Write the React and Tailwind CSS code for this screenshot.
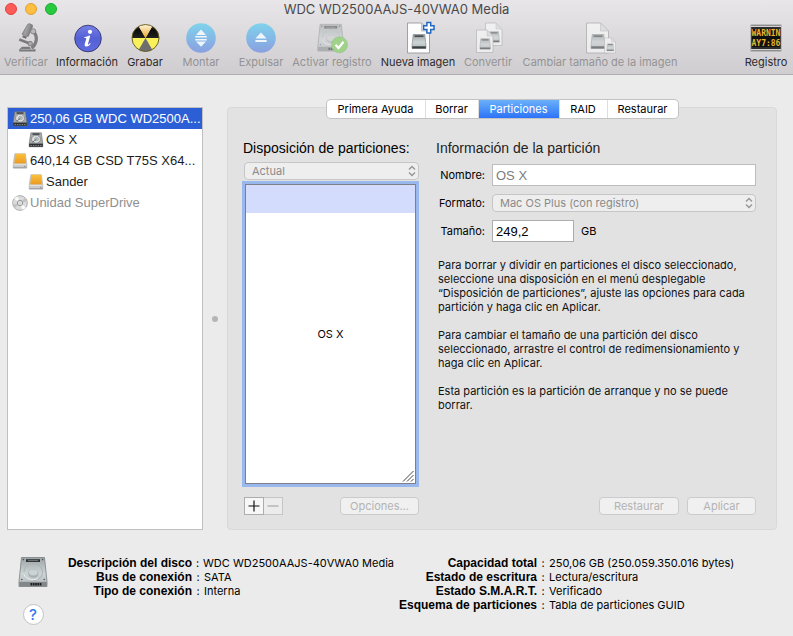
import React, { useState } from 'react';
import clsx from 'clsx';

const Microscope = () => (
  <svg viewBox="0 0 32 32" className="size-8">
    <defs>
      <linearGradient id="tube" x1="0" y1="0" x2="1" y2="0.4">
        <stop offset="0" stopColor="#6c6b6d" />
        <stop offset="0.5" stopColor="#a3a2a4" />
        <stop offset="1" stopColor="#737274" />
      </linearGradient>
    </defs>
    <path
      d="M23.500 9.500c4.200 4.800 4 11.500-1.800 17"
      fill="none"
      stroke="#7f7e80"
      strokeWidth="3.200"
    />
    <path d="M17.500 2.600l1.600-1 3.200 1.300.3 1.700-4.400 10-6.200-2.300z" fill="url(#tube)" stroke="#6f6e70" strokeWidth="0.600" />
    <path d="M13 13.300l4 1.500-1 1.900-3.800-1.400z" fill="#6f6e70" />
    <circle cx="23.200" cy="9.300" r="2.600" fill="#bab9bb" stroke="#767577" strokeWidth="0.800" />
    <path d="M9.600 16.200l11.300 4.300-1 2.600-11-4.300z" fill="#7a797b" />
    <circle cx="20.200" cy="21.600" r="2.300" fill="#a9a8aa" stroke="#737274" strokeWidth="0.800" />
    <path d="M12 24.800h7.500l1.500 2.200h4.500v2.600H9.200v-2z" fill="#79787a" />
    <path d="M10.500 27.400h14" stroke="#b5b4b6" strokeWidth="0.800" />
  </svg>
);

const Info = () => (
  <svg viewBox="0 0 32 32" className="size-8">
    <defs>
      <linearGradient id="info" x1="0" y1="0" x2="0" y2="1">
        <stop offset="0" stopColor="#7580e6" />
        <stop offset="0.5" stopColor="#5560d4" />
        <stop offset="1" stopColor="#5f6ce0" />
      </linearGradient>
    </defs>
    <circle cx="17" cy="16.500" r="13.300" fill="url(#info)" stroke="#34376e" strokeWidth="0.900" />
    <circle cx="19" cy="9.800" r="2.100" fill="#fff" />
    <path
      d="M13.300 15.200c1.800-.3 3.600-.9 5-1.600l.9.300-2.200 7.900c-.2.700.2.900.7.600.5-.3.900-.8 1.300-1.400l.7.500c-1 1.800-2.500 3.100-4.100 3.100-1.700 0-2.300-1.100-1.900-2.600l1.500-5.100c.1-.6-.1-.8-.7-.8h-1.300z"
      fill="#fff"
    />
  </svg>
);

const Burn = () => (
  <svg viewBox="0 0 32 32" className="size-8">
    <defs>
      <clipPath id="burnClip">
        <circle cx="16.500" cy="16" r="13.500" />
      </clipPath>
      <linearGradient id="burnDark" x1="0" y1="0" x2="0" y2="1">
        <stop offset="0" stopColor="#666" />
        <stop offset="0.500" stopColor="#0d0d0d" />
        <stop offset="1" stopColor="#222" />
      </linearGradient>
      <linearGradient id="burnTop" x1="0" y1="0" x2="0" y2="1">
        <stop offset="0.100" stopColor="#fffbe8" />
        <stop offset="1" stopColor="#eda42e" />
      </linearGradient>
    </defs>
    <g clipPath="url(#burnClip)">
      <rect width="32" height="32" fill="#f9f05a" />
      <path d="M16.500 16H0V0h7.300z" fill="url(#burnDark)" />
      <path d="M16.500 16H32V0h-6.300z" fill="url(#burnDark)" />
      <path d="M16.500 16L7.300 0h18.400z" fill="url(#burnTop)" />
      <path d="M16.500 16L7.300 32h18.400z" fill="#6e6e6e" />
    </g>
    <circle cx="16.500" cy="16" r="13.500" fill="none" stroke="#5c5320" strokeWidth="0.900" />
  </svg>
);

const Round = ({ children }) => (
  <svg viewBox="0 0 32 32" className="size-8">
    <defs>
      <linearGradient id="round" x1="0" y1="0" x2="0" y2="1">
        <stop offset="0" stopColor="#7fd3ec" />
        <stop offset="1" stopColor="#8a9fe0" />
      </linearGradient>
    </defs>
    <circle cx="16" cy="16" r="14.800" fill="url(#round)" />
    <g fill="#eef6fc">{children}</g>
  </svg>
);

const Mount = () => (
  <Round>
    <path d="M16 7.600l5 5.400H11zM16 24.800l5-5.400H11zM10.200 14h11.600v1.500H10.200zM10.200 17h11.600v1.500H10.200z" />
  </Round>
);

const Eject = () => (
  <Round>
    <path d="M16 10.400l5.600 6H10.400zM10.400 18h11.200v2H10.400z" />
  </Round>
);

const DriveShape = () => (
  <g>
    <path d="M4.500 1.500h23l2.500 24v5H2v-5z" fill="url(#drive)" stroke="#7c8183" strokeWidth="0.800" />
    <path d="M2.200 25.800h27.600v4.600H2.200z" fill="#82888a" />
    <path d="M13.500 28.200h11" stroke="#1d1d1d" strokeWidth="2.400" strokeDasharray="1.700 0.600" />
    <path d="M9 3.200h14v2.800H9z" fill="#2f3234" />
    <path d="M11 4.600h10" stroke="#888" strokeWidth="0.800" />
    <path d="M7 16c0-5 4-8.500 9-8.500s9.500 3.500 9.500 8.500-4 8.500-9.500 8.500" fill="none" stroke="#a9b1b3" strokeWidth="0.900" />
    <ellipse cx="16.300" cy="17.500" rx="5.200" ry="4.200" fill="#a7afb1" />
    <ellipse cx="16.300" cy="16.600" rx="4.400" ry="3" fill="#ccd3d4" />
    <path d="M7 18.500c1.500 4.500 9 6.500 14 4" fill="none" stroke="#f0f3f3" strokeWidth="0.900" />
    <g fill="#4f5355">
      <circle cx="6.400" cy="3.600" r="0.800" />
      <circle cx="25.600" cy="3.600" r="0.800" />
      <circle cx="4.800" cy="23.500" r="0.800" />
      <circle cx="27.200" cy="23.500" r="0.800" />
    </g>
  </g>
);

const Drive = ({ className }) => (
  <svg viewBox="0 0 32 32" className={className}>
    <defs>
      <linearGradient id="drive" x1="0" y1="0" x2="0" y2="1">
        <stop offset="0" stopColor="#9ba4a6" />
        <stop offset="0.550" stopColor="#cdd4d5" />
        <stop offset="1" stopColor="#b2babc" />
      </linearGradient>
    </defs>
    <DriveShape />
  </svg>
);

const SmallDrive = () => (
  <svg viewBox="0 0 16 16" className="size-4 shrink-0">
    <path d="M2.800.8h10.600l1.400 10.400v3.600H1.200v-3.600z" fill="#a4a8aa" stroke="#66696b" strokeWidth="0.500" />
    <path d="M1.200 11.600h13.600v3.200H1.200z" fill="#2d3032" />
    <path d="M2.500 13.600h11" stroke="#8d9091" strokeWidth="1" strokeDasharray="1.400 1" />
    <path d="M4.500 1.300h7v1.500h-7z" fill="#3d4042" />
    <ellipse cx="8" cy="7.200" rx="4.400" ry="3.900" fill="#dfe2e3" stroke="#6d7173" strokeWidth="0.600" />
    <ellipse cx="8.500" cy="7" rx="2" ry="1.600" fill="#c2c6c7" stroke="#7b7f81" strokeWidth="0.500" />
    <path d="M8.500 7.200l-4 3" stroke="#56595b" strokeWidth="0.800" />
  </svg>
);

const ExternalDrive = () => (
  <svg viewBox="0 0 16 16" className="size-4 shrink-0">
    <defs>
      <linearGradient id="external" x1="0" y1="0" x2="0" y2="1">
        <stop offset="0" stopColor="#fbc23c" />
        <stop offset="1" stopColor="#eb9a22" />
      </linearGradient>
    </defs>
    <path d="M2.800.8h10.600l1.400 10v4.200H1.200v-4.200z" fill="#c9cbcc" stroke="#a0a2a3" strokeWidth="0.500" />
    <path d="M3.200.8h9.800l.9 9.600H2.300z" fill="url(#external)" />
    <path d="M1.500 11.300h13" stroke="#ececec" strokeWidth="0.800" />
    <path d="M1.200 14.800h13.600" stroke="#888a8b" strokeWidth="0.700" />
    <circle cx="12.800" cy="13.200" r="0.500" fill="#666" />
  </svg>
);

const Disc = () => (
  <svg viewBox="0 0 16 16" className="size-4 shrink-0">
    <circle cx="8" cy="8" r="7.400" fill="#dcdcdc" stroke="#a2a2a2" strokeWidth="0.800" />
    <path d="M8 8L2.200 3.600A7 7 0 0 1 5.600 1.300z" fill="#fafafa" />
    <path d="M8 8l5.800 4.400a7 7 0 0 1-3.400 2.300z" fill="#fafafa" />
    <path d="M8 8L1.500 9.500a7 7 0 0 0 1.600 3.400z" fill="#c2c2c2" />
    <path d="M8 8l6.500-1.500a7 7 0 0 0-1.600-3.400z" fill="#c2c2c2" />
    <circle cx="8" cy="8" r="2.700" fill="#eee" stroke="#8e8e8e" strokeWidth="0.900" />
    <circle cx="8" cy="8" r="1.100" fill="#fff" stroke="#a0a0a0" strokeWidth="0.500" />
  </svg>
);

const Journal = () => (
  <svg viewBox="0 0 32 32" className="size-8">
    <g opacity="0.500" transform="translate(0 1) scale(0.920 0.920)">
      <DriveShape />
    </g>
    <circle cx="23.500" cy="22.800" r="8" fill="#a0d28c" stroke="#8fc07c" strokeWidth="0.500" />
    <path d="M19.500 22.800l3 3.200 5-6.200" fill="none" stroke="#fff" strokeWidth="2.200" />
  </svg>
);

const Page = ({ transform }) => (
  <g transform={transform}>
    <path d="M0 0h14l8 8v22H0z" fill="#fdfdfd" stroke="#98989a" strokeWidth="0.900" />
    <path d="M14 0v8h8z" fill="#dedee0" stroke="#b2b2b4" strokeWidth="0.700" />
    <g transform="translate(4.500 11.500)">
      <path d="M1.200 0h11.600L14 11.500V14H0v-2.500z" fill="url(#drive)" stroke="#7c8183" strokeWidth="0.600" />
      <path d="M2.500.8h9v1.800h-9z" fill="#4a4e50" />
      <path d="M.2 11.800h13.600V14H.2z" fill="#3c4042" />
    </g>
  </g>
);

const NewImage = () => (
  <svg viewBox="0 0 32 32" className="size-8 overflow-visible">
    <Page transform="translate(5.500 1)" />
    <path
      d="M24.900.5h3.800v3.300h3.300v3.800h-3.300v3.300h-3.800V7.600h-3.300V3.800h3.300z"
      fill="#fff"
      stroke="#2167c4"
      strokeWidth="1.500"
    />
  </svg>
);

const Convert = () => (
  <svg viewBox="0 0 32 32" className="size-8 opacity-60">
    <Page transform="translate(13.500 1) scale(0.750)" />
    <Page transform="translate(4.500 8) scale(0.750)" />
  </svg>
);

const Resize = () => (
  <svg viewBox="0 0 32 32" className="size-8 opacity-60">
    <Page transform="translate(2.500 1)" />
    <Page transform="translate(20.500 16) scale(0.500)" />
  </svg>
);

const Log = () => (
  <svg viewBox="0 0 32 32" className="size-8">
    <rect x="1" y="3" width="30" height="26" fill="#111" stroke="#8c8c8c" strokeWidth="0.800" />
    <path d="M1 4.200h30M1 27.800h30" stroke="#d5d5d5" strokeWidth="1.600" />
    <path d="M1 6h30M1 26h30" stroke="#555" strokeWidth="0.800" />
    <g
      fill="#e6b82e"
      fontFamily="'DejaVu Sans Mono', monospace"
      fontWeight="700"
      fontSize="8"
    >
      <text x="1.500" y="14">WARNIN</text>
      <text x="1.500" y="24">AY7:86</text>
    </g>
  </svg>
);

const tools = [
  { label: 'Verificar', icon: Microscope, width: 'w-[52px]', disabled: true },
  { label: 'Información', icon: Info, width: 'w-[70px]' },
  { label: 'Grabar', icon: Burn, width: 'w-[46px]' },
  { label: 'Montar', icon: Mount, width: 'w-[66px]', disabled: true },
  { label: 'Expulsar', icon: Eject, width: 'w-[54px]', disabled: true },
  { label: 'Activar registro', icon: Journal, width: 'w-[88px]', disabled: true },
  { label: 'Nueva imagen', icon: NewImage, width: 'w-[84px]' },
  { label: 'Convertir', icon: Convert, width: 'w-[56px]', disabled: true },
  { label: 'Cambiar tamaño de la imagen', icon: Resize, width: 'w-[168px]', disabled: true },
  { label: 'Registro', icon: Log, width: 'w-[54px] ml-auto' },
];

const disks = [
  { name: '250,06 GB WDC WD2500A...', icon: SmallDrive },
  { name: 'OS X', icon: SmallDrive, child: true },
  { name: '640,14 GB CSD T75S X64...', icon: ExternalDrive },
  { name: 'Sander', icon: ExternalDrive, child: true },
  { name: 'Unidad SuperDrive', icon: Disc, muted: true },
];

const tabs = [
  { name: 'Primera Ayuda', width: 'w-[98px]' },
  { name: 'Borrar', width: 'w-[53px]' },
  { name: 'Particiones', width: 'w-[81px]' },
  { name: 'RAID', width: 'w-[48px]' },
  { name: 'Restaurar', width: 'w-[71px]' },
];

const diskInfo = [
  ['Descripción del disco', 'WDC WD2500AAJS-40VWA0 Media'],
  ['Bus de conexión', 'SATA'],
  ['Tipo de conexión', 'Interna'],
];

const capacityInfo = [
  ['Capacidad total', '250,06 GB (250.059.350.016 bytes)'],
  ['Estado de escritura', 'Lectura/escritura'],
  ['Estado S.M.A.R.T.', 'Verificado'],
  ['Esquema de particiones', 'Tabla de particiones GUID'],
];

const Toolbar = () => (
  <header className="h-[75px] border-b border-[#b0afb0] bg-linear-to-b from-[#e8e6e8] to-[#cfcdcf]">
    <div className="relative h-5">
      <div className="absolute top-[3px] left-[5px] flex gap-2">
        <button aria-label="Cerrar" className="size-3 rounded-full border border-[#e0443e] bg-[#fc5b57]" />
        <button aria-label="Minimizar" className="size-3 rounded-full border border-[#dea033] bg-[#fdbe41]" />
        <button aria-label="Ampliar" className="size-3 rounded-full border border-[#1aad2f] bg-[#29c93f]" />
      </div>
      <h1 className="text-center font-['Inter'] text-[13px] leading-[18px] text-[#4a494b]">
        WDC WD2500AAJS-40VWA0 Media
      </h1>
    </div>
    <div className="flex pt-[2px]">
      {tools.map(({ label, icon: Icon, width, disabled }) => (
        <button
          key={label}
          disabled={disabled}
          className={clsx(
            'flex flex-col items-center whitespace-nowrap',
            width,
            disabled ? 'text-[#949395]' : 'text-[#2c2b2d]'
          )}
        >
          <Icon />
          <span className="leading-4">{label}</span>
        </button>
      ))}
    </div>
  </header>
);

const Sidebar = ({ selected, onSelect }) => (
  <ul className="w-[196px] border border-[#c0c0c0] bg-white font-['Liberation_Sans'] text-[13px]">
    {disks.map(({ name, icon: Icon, child, muted }) => (
      <li key={name}>
        <button
          onClick={() => onSelect(name)}
          className={clsx(
            'flex h-[21px] w-full items-center gap-[2px] whitespace-nowrap',
            child ? 'pl-5' : 'pl-1',
            name === selected && 'bg-[#2c5fd6] text-white',
            muted ? 'text-[#8f8f8f]' : name !== selected && 'text-[#1c1c1c]'
          )}
        >
          <Icon />
          {name}
        </button>
      </li>
    ))}
  </ul>
);

const Select = ({ id, label, value }) => (
  <div className="relative">
    <select
      id={id}
      aria-label={label}
      disabled
      className="block h-[18px] w-full appearance-none rounded-[4px] border border-[#c6c6c6] bg-[#eeeeee] pl-[7px] leading-4 text-[#8a8a8a] opacity-100"
    >
      <option>{value}</option>
    </select>
    <svg
      viewBox="0 0 8 12"
      className="pointer-events-none absolute top-[3px] right-[3px] h-3 w-2"
      fill="none"
      stroke="#969696"
      strokeWidth="1.400"
    >
      <path d="M1 4.500l3-3 3 3M1 7.500l3 3 3-3" />
    </svg>
  </div>
);

const PushButton = ({ children, className }) => (
  <button
    disabled
    className={clsx(
      'h-[18px] rounded-[4px] border border-[#cbcbcb] bg-[#f0f0f0] leading-4 text-[#b3b3b3]',
      className
    )}
  >
    {children}
  </button>
);

const Partitions = () => (
  <div className="flex flex-1 gap-[17px] pt-5 pr-5 pb-[14px] pl-[14px]">
    <div className="flex w-[177px] flex-col">
      <h2 className="pl-px font-['Liberation_Sans'] text-[14px] leading-5 whitespace-nowrap text-black">
        Disposición de particiones:
      </h2>
      <div className="mt-1 pl-[2px]">
        <Select label="Disposición de particiones" value="Actual" />
      </div>
      <div className="mt-px flex flex-1 bg-[#98b8ee] p-[3px]">
        <div className="relative flex flex-1 items-center justify-center border border-[#7d8187] bg-white text-black">
          <div className="absolute inset-x-0 top-0 h-7 bg-[#d3dcfd]" />
          OS X
          <svg
            viewBox="0 0 12 12"
            className="absolute right-px bottom-px size-3"
            stroke="#444"
            strokeWidth="1"
          >
            <path d="M1 11.500L11.500 1M5 11.500L11.500 5M9 11.500L11.500 9" />
          </svg>
        </div>
      </div>
      <div className="mt-[10px] flex pl-[2px]">
        <button
          aria-label="Añadir"
          className="flex h-[18px] w-5 items-center justify-center border border-[#adadad] bg-[#f7f7f7]"
        >
          <svg viewBox="0 0 12 12" className="size-3" stroke="#111" strokeWidth="1.200">
            <path d="M.5 6h11M6 .5v11" />
          </svg>
        </button>
        <button
          disabled
          aria-label="Eliminar"
          className="flex h-[18px] w-[19px] items-center justify-center border border-l-0 border-[#c6c6c6] bg-[#ececec]"
        >
          <svg viewBox="0 0 12 12" className="size-3" stroke="#a9a9a9" strokeWidth="1.200">
            <path d="M.5 6h11" />
          </svg>
        </button>
        <PushButton className="ml-auto w-[79px]">Opciones...</PushButton>
      </div>
    </div>

    <div className="flex flex-1 flex-col">
      <h2 className="font-['Liberation_Sans'] text-[14px] leading-5 text-[#222]">
        Información de la partición
      </h2>
      <div className="mt-[6px] grid grid-cols-[49px_1fr] items-center gap-x-[7px] gap-y-2 text-black">
        <label htmlFor="nombre" className="text-right">Nombre:</label>
        <input
          id="nombre"
          disabled
          defaultValue="OS X"
          className="h-[22px] border border-[#bdbdbd] bg-white px-[3px] font-['Liberation_Sans'] text-[13px] text-[#7d7d7d]"
        />
        <label htmlFor="formato" className="text-right">Formato:</label>
        <Select id="formato" value="Mac OS Plus (con registro)" />
        <label htmlFor="tamano" className="text-right">Tamaño:</label>
        <div className="flex items-center gap-[7px]">
          <input
            id="tamano"
            defaultValue="249,2"
            className="h-[22px] w-[82px] border border-[#adadad] bg-white px-[3px] font-['Liberation_Sans'] text-[13px] text-black"
          />
          GB
        </div>
      </div>
      <div className="mt-4 flex flex-col gap-[14px] pl-[2px] leading-[14px] text-[#111]">
        <p>
          Para borrar y dividir en particiones el disco seleccionado, seleccione una disposición en
          el menú desplegable “Disposición de particiones”, ajuste las opciones para cada partición
          y haga clic en Aplicar.
        </p>
        <p>
          Para cambiar el tamaño de una partición del disco seleccionado, arrastre el control de
          redimensionamiento y haga clic en Aplicar.
        </p>
        <p>Esta partición es la partición de arranque y no se puede borrar.</p>
      </div>
      <div className="mt-auto flex justify-end gap-2">
        <PushButton className="w-20">Restaurar</PushButton>
        <PushButton className="w-[69px]">Aplicar</PushButton>
      </div>
    </div>
  </div>
);

const InfoList = ({ items, className }) => (
  <dl className={clsx('leading-[14px] whitespace-nowrap text-black', className)}>
    {items.map(([term, value]) => (
      <div key={term} className="flex">
        <dt className="flex-1 text-right font-['Liberation_Sans'] text-[12px] font-bold">{term}</dt>
        <dd className="flex w-[202px]">
          <span className="w-3 text-center">:</span>
          {value}
        </dd>
      </div>
    ))}
  </dl>
);

export default function App() {
  const [tab, setTab] = useState('Particiones');
  const [disk, setDisk] = useState(disks[0].name);

  return (
    <div className="flex min-h-screen flex-col bg-[#ebebeb] font-['Inter',sans-serif] text-[11px]">
      <Toolbar />
      <main className="flex min-h-[455px] flex-1 pt-8 pr-4 pl-[7px]">
        <Sidebar selected={disk} onSelect={setDisk} />
        <div className="flex w-6 items-center justify-center">
          <div className="size-[6px] rounded-full bg-[#b5b5b5]" />
        </div>
        <section className="flex flex-1 flex-col rounded-[4px] border border-[#d9d9d9] bg-[#e2e2e2]">
          <div
            role="tablist"
            className="-mt-2 flex h-[18px] self-center rounded-[4px] bg-white shadow-[0_0_0_1px_#c3c3c3]"
          >
            {tabs.map(({ name, width }) => (
              <button
                key={name}
                role="tab"
                aria-selected={name === tab}
                onClick={() => setTab(name)}
                className={clsx(
                  'border-l border-[#dedede] text-center leading-[18px] first:border-l-0',
                  width,
                  name === tab
                    ? 'bg-linear-to-b from-[#6bb0fa] to-[#2d72f8] text-white'
                    : 'text-black'
                )}
              >
                {name}
              </button>
            ))}
          </div>
          <Partitions />
        </section>
      </main>
      <footer className="flex h-[106px] shrink-0 pt-[26px] pl-[17px]">
        <div className="flex w-8 flex-col items-center gap-4">
          <Drive className="size-8" />
          <button
            aria-label="Ayuda"
            className="size-[21px] rounded-full border border-[#c3c3c3] bg-white text-[15px] leading-[19px] font-medium text-[#2f78f5]"
          >
            ?
          </button>
        </div>
        <InfoList items={diskInfo} className="w-[345px]" />
        <InfoList items={capacityInfo} className="w-[345px]" />
      </footer>
    </div>
  );
}
